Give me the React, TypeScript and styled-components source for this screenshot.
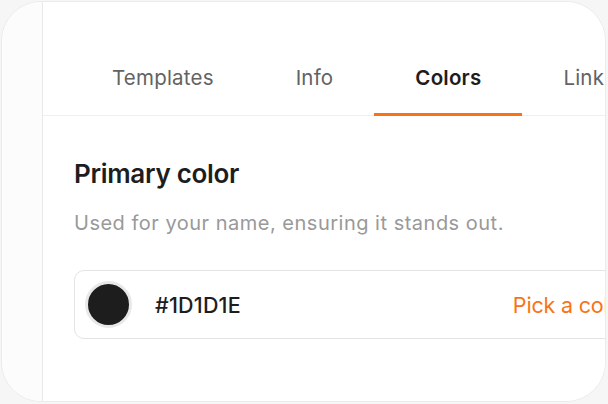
import type { FC } from 'react';
import styled, { createGlobalStyle } from 'styled-components';

const GlobalStyle = createGlobalStyle`
  html, body {
    margin: 0;
    padding: 0;
    background: #f6f6f6;
  }
  body {
    font-family: Inter, "Noto Sans", "Liberation Sans", sans-serif;
    -webkit-font-smoothing: antialiased;
  }
`;

const Frame = styled.div`
  width: 608px;
  height: 404px;
  padding: 1px 2px 2px 1px;
  box-sizing: border-box;
`;

const Card = styled.div`
  display: flex;
  height: 100%;
  box-sizing: border-box;
  border: 1px solid #ebebeb;
  border-radius: 40px;
  background: #fff;
  overflow: hidden;
`;

const SideStrip = styled.div`
  flex: 0 0 40px;
  background: #fcfcfc;
  border-right: 1px solid #e9e9e9;
`;

const Main = styled.div`
  flex: 1;
  min-width: 0;
  overflow: hidden;
  background: #fff;
`;

const TabBar = styled.nav`
  display: flex;
  align-items: flex-end;
  height: 114px;
  padding-left: 28px;
  border-bottom: 1px solid #efefef;
  box-sizing: border-box;
`;

const Tab = styled.div<{ $active?: boolean }>`
  flex: none;
  padding: 0 41px 23px;
  margin-bottom: -1px;
  font-size: 20.5px;
  line-height: 24px;
  letter-spacing: 0.2px;
  font-weight: ${p => (p.$active ? 600 : 400)};
  color: ${p => (p.$active ? '#1d1d1e' : '#636363')};
  border-bottom: 3px solid ${p => (p.$active ? '#f97316' : 'transparent')};
  white-space: nowrap;
`;

const Section = styled.section`
  padding: 42px 0 0 31px;
`;

const Title = styled.h2`
  margin: 0;
  font-size: 26px;
  line-height: 32px;
  font-weight: 600;
  letter-spacing: -0.3px;
  color: #1d1d1e;
`;

const Hint = styled.p`
  margin: 21px 0 0;
  font-size: 20px;
  line-height: 24px;
  font-weight: 400;
  letter-spacing: 0.5px;
  color: #999;
  white-space: nowrap;
`;

const ColorField = styled.div`
  display: flex;
  align-items: center;
  width: 574px;
  height: 69px;
  margin-top: 35px;
  padding: 0 18px 0 10px;
  box-sizing: border-box;
  border: 1.5px solid #e4e4e4;
  border-radius: 10px;
`;

const Swatch = styled.span<{ $color: string }>`
  flex: none;
  width: 47px;
  height: 47px;
  box-sizing: border-box;
  border-radius: 50%;
  border: 3px solid #e8e8e8;
  background: ${p => p.$color};
`;

const HexValue = styled.span`
  margin-left: 23px;
  font-size: 21.5px;
  font-weight: 500;
  letter-spacing: 0.2px;
  color: #1d1d1e;
`;

const PickLink = styled.span`
  margin-left: auto;
  font-size: 21.5px;
  font-weight: 400;
  letter-spacing: -0.2px;
  color: #f97316;
  white-space: nowrap;
`;

const tabs = ['Templates', 'Info', 'Colors', 'Links'];

const App: FC = () => (
  <>
    <GlobalStyle />
    <Frame>
      <Card>
        <SideStrip />
        <Main>
          <TabBar>
            {tabs.map(t => (
              <Tab key={t} $active={t === 'Colors'}>
                {t}
              </Tab>
            ))}
          </TabBar>
          <Section>
            <Title>Primary color</Title>
            <Hint>Used for your name, ensuring it stands out.</Hint>
            <ColorField>
              <Swatch $color="#1d1d1e" />
              <HexValue>#1D1D1E</HexValue>
              <PickLink>Pick a color</PickLink>
            </ColorField>
          </Section>
        </Main>
      </Card>
    </Frame>
  </>
);

export default App;
